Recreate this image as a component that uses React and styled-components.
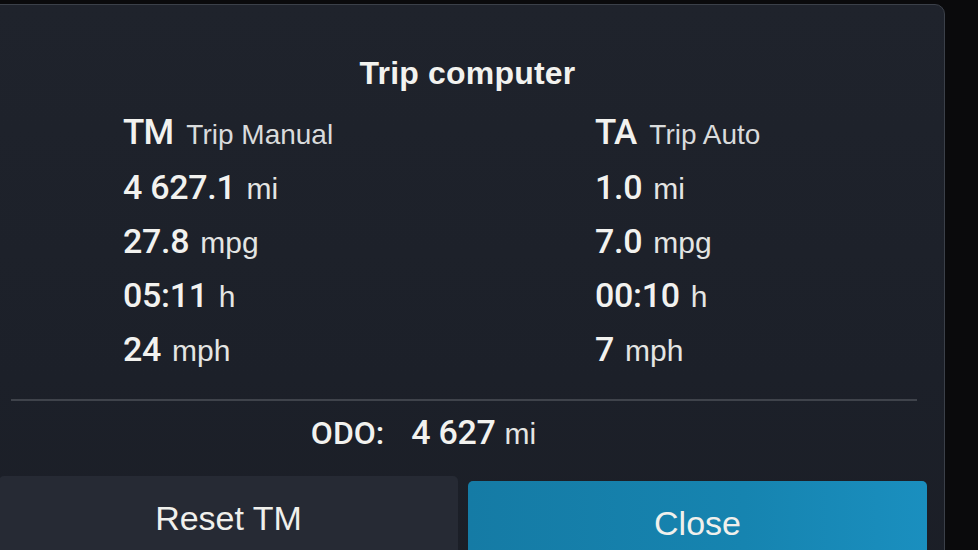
import React from "react";
import styled, { createGlobalStyle } from "styled-components";

const Global = createGlobalStyle`
  html, body {
    margin: 0;
    padding: 0;
    background: #0a0a0c;
    overflow: hidden;
  }
  body {
    font-family: "Liberation Sans", Arial, sans-serif;
    color: #f2f2ef;
  }
`;

const trips = [
  {
    code: "TM",
    name: "Trip Manual",
    rows: [
      ["4 627.1", "mi"],
      ["27.8", "mpg"],
      ["05:11", "h"],
      ["24", "mph"],
    ],
  },
  {
    code: "TA",
    name: "Trip Auto",
    rows: [
      ["1.0", "mi"],
      ["7.0", "mpg"],
      ["00:10", "h"],
      ["7", "mph"],
    ],
  },
];

const App = () => {
  return (
    <Screen>
      <Global />
      <Panel>
        <Title>Trip computer</Title>
        <Columns>
          {trips.map((t) => (
            <Column key={t.code}>
              <Header>
                <Code>{t.code}</Code>
                <Name>{t.name}</Name>
              </Header>
              {t.rows.map(([v, u]) => (
                <Row key={u}>
                  <Value>{v}</Value>
                  <Unit>{u}</Unit>
                </Row>
              ))}
            </Column>
          ))}
        </Columns>
        <Divider />
        <Odo>
          <OdoLabel>ODO:</OdoLabel>
          <Value>4 627</Value>
          <Unit>mi</Unit>
        </Odo>
        <Buttons>
          <Button>Reset TM</Button>
          <Button primary>Close</Button>
        </Buttons>
      </Panel>
    </Screen>
  );
};

export default App;

const Screen = styled.div`
  width: 978px;
  height: 550px;
  overflow: hidden;
  padding-top: 4px;
  box-sizing: border-box;
`;

const Panel = styled.div`
  margin-left: -12px;
  width: 957px;
  height: 620px;
  box-sizing: border-box;
  background: linear-gradient(180deg, #1f232c 0%, #1c2029 60%, #1b1e26 100%);
  border: 1px solid #3b4049;
  border-radius: 10px;
  padding-top: 51px;
`;

const Title = styled.div`
  text-align: center;
  font-size: 32px;
  font-weight: 700;
  line-height: 34px;
  height: 34px;
  padding-left: 2px;
  letter-spacing: 0.2px;
`;

const Columns = styled.div`
  display: grid;
  grid-template-columns: 472px 1fr;
  padding-left: 134px;
  margin-top: 16px;
`;

const Column = styled.div`
  display: flex;
  flex-direction: column;
`;

const Header = styled.div`
  display: flex;
  align-items: baseline;
  gap: 13px;
  height: 54px;
  line-height: 54px;
`;

const Code = styled.span`
  font-family: Roboto, "Liberation Sans", sans-serif;
  font-size: 35px;
  font-weight: 500;
  letter-spacing: -0.8px;
`;

const Name = styled.span`
  font-size: 28px;
  color: #d9dbdc;
`;

const Row = styled.div`
  display: flex;
  align-items: baseline;
  gap: 11px;
  height: 54px;
  line-height: 54px;
`;

const Value = styled.span`
  font-family: Roboto, "Liberation Sans", sans-serif;
  font-size: 34px;
  font-weight: 500;
  letter-spacing: -0.3px;
`;

const Unit = styled.span`
  font-size: 30px;
  color: #e4e5e3;
`;

const Divider = styled.div`
  height: 2px;
  background: #3f434b;
  margin: 23px 27px 0 22px;
`;

const Odo = styled.div`
  display: flex;
  align-items: baseline;
  justify-content: center;
  gap: 9px;
  height: 40px;
  line-height: 40px;
  margin-top: 11px;
  padding-right: 86px;
`;

const OdoLabel = styled.span`
  font-family: Roboto, "Liberation Sans", sans-serif;
  font-size: 32px;
  font-weight: 500;
  margin-right: 18px;
`;

const Buttons = styled.div`
  display: flex;
  gap: 10px;
  margin-top: 24px;
  padding: 0 17px 0 10px;
`;

const Button = styled.button`
  flex: 1;
  height: 110px;
  border: none;
  border-radius: 5px;
  padding: 0 0 26px;
  font-family: "Liberation Sans", Arial, sans-serif;
  font-size: 34px;
  color: #f0f0ec;
  background: ${(p) =>
    p.primary
      ? "linear-gradient(90deg, #157ba5 0%, #1684b0 60%, #1a8fbf 100%)"
      : "#262a34"};
  margin-top: ${(p) => (p.primary ? "5px" : "0")};
`;
